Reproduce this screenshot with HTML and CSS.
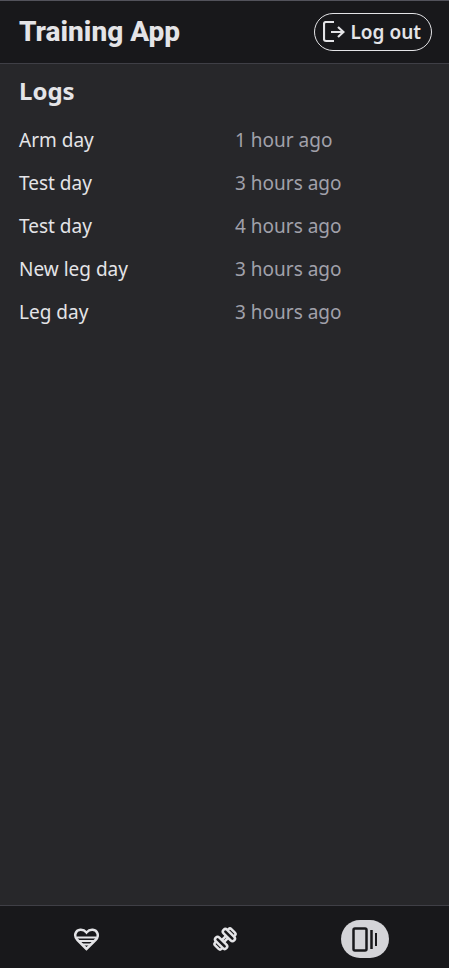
FILE: index.html
```html
<!DOCTYPE html>
<html lang="en">
<head>
<meta charset="utf-8">
<meta name="viewport" content="width=device-width, initial-scale=1">
<title>Training App</title>
<link rel="stylesheet" href="styles.css">
</head>
<body>
<header class="topbar">
  <h1 class="brand">Training App</h1>
  <button class="logout" type="button">
    <svg class="logout-icon" viewBox="0 0 22 22" aria-hidden="true"><path d="M11 1H3Q1 1 1 3V18Q1 20 3 20H11M8 11H20M15 6L20.500 11L15 16"/></svg>
    Log out
  </button>
</header>
<main class="content">
  <h2 class="heading">Logs</h2>
  <ul class="logs">
    <li class="log"><span>Arm day</span><span class="when">1 hour ago</span></li>
    <li class="log"><span>Test day</span><span class="when">3 hours ago</span></li>
    <li class="log"><span>Test day</span><span class="when">4 hours ago</span></li>
    <li class="log"><span>New leg day</span><span class="when">3 hours ago</span></li>
    <li class="log"><span>Leg day</span><span class="when">3 hours ago</span></li>
  </ul>
</main>
<nav class="tabs" aria-label="Main">
  <a class="tab" href="#health" aria-label="Health">
    <svg class="tab-icon" viewBox="0 0 26 26" aria-hidden="true"><path d="M13.500 23L4.500 14C2 11.500 2 9 2.500 7.500C4 3 10 2.500 13.500 6.500C17 2.500 23 3 24.500 7.500C25 9 25 11.500 22.500 14Z"/><path class="thin" d="M4 11.500H23M5 15H22M9 18.500H18"/></svg>
  </a>
  <a class="tab" href="#workouts" aria-label="Workouts">
    <svg class="tab-icon" viewBox="0 0 26 26" aria-hidden="true"><g transform="rotate(-45 13 13)"><rect x="5" y="5.500" width="5" height="15" rx="2.500"/><rect x="16" y="5.500" width="5" height="15" rx="2.500"/><path d="M10 11.500H16M10 14.500H16M5 8.500H3.500Q1.500 8.500 1.500 10.500V15.500Q1.500 17.500 3.500 17.500H5M21 8.500H22.500Q24.500 8.500 24.500 10.500V15.500Q24.500 17.500 22.500 17.500H21"/></g></svg>
  </a>
  <a class="tab tab-active" href="#logs" aria-label="Logs" aria-current="page">
    <svg class="tab-icon" viewBox="0 0 26 26" aria-hidden="true"><rect x="1.500" y="2.500" width="13" height="22" rx="1.500"/><path d="M19.500 4V23"/><path class="thin" d="M24 7V20"/></svg>
  </a>
</nav>
</body>
</html>
```
FILE: styles.css
```css
* {
  box-sizing: border-box;
}

body {
  margin: 0;
  min-height: 100vh;
  display: flex;
  flex-direction: column;
  background: #27272a;
  color: #e4e4e7;
  font: 19px/28px "Noto Sans", sans-serif;
}

.topbar {
  display: flex;
  align-items: center;
  justify-content: space-between;
  height: 64px;
  padding: 0 17px 0 19px;
  background: #18181b;
  border-top: 1px solid #52525b;
  border-bottom: 1px solid #3f3f46;
}

.brand {
  margin: 0;
  font: 800 28px/40px Roboto, sans-serif;
}

.logout {
  display: flex;
  align-items: center;
  gap: 6px;
  height: 38px;
  padding: 0 10px 0 8px;
  border: 1px solid #e4e4e7;
  border-radius: 19px;
  background: none;
  color: inherit;
  font: 600 19px/28px "Noto Sans", sans-serif;
}

.logout-icon,
.tab-icon {
  fill: none;
  stroke: currentColor;
  stroke-width: 2.5;
}

.logout-icon {
  width: 22px;
  height: 22px;
  stroke-width: 2.2;
}

.thin {
  stroke-width: 2;
}

.content {
  flex: 1;
  padding: 9px 19px;
}

.heading {
  margin: 0 0 13px;
  font-size: 24px;
  line-height: 36px;
}

.logs {
  display: grid;
  gap: 15px;
  margin: 0;
  padding: 4px 0;
  list-style: none;
}

.log {
  display: grid;
  grid-template-columns: 1fr 1fr;
  column-gap: 21px;
}

.when {
  color: #a1a1aa;
}

.tabs {
  display: flex;
  align-items: center;
  justify-content: space-around;
  height: 63px;
  padding: 4px 14px 0 16px;
  background: #18181b;
  border-top: 1px solid #3f3f46;
}

.tab {
  display: grid;
  place-items: center;
  width: 48px;
  height: 38px;
  border-radius: 19px;
  color: #e4e4e7;
}

.tab-active {
  background: #d4d4d8;
  color: #18181b;
}

.tab-icon {
  width: 26px;
  height: 26px;
}
```
